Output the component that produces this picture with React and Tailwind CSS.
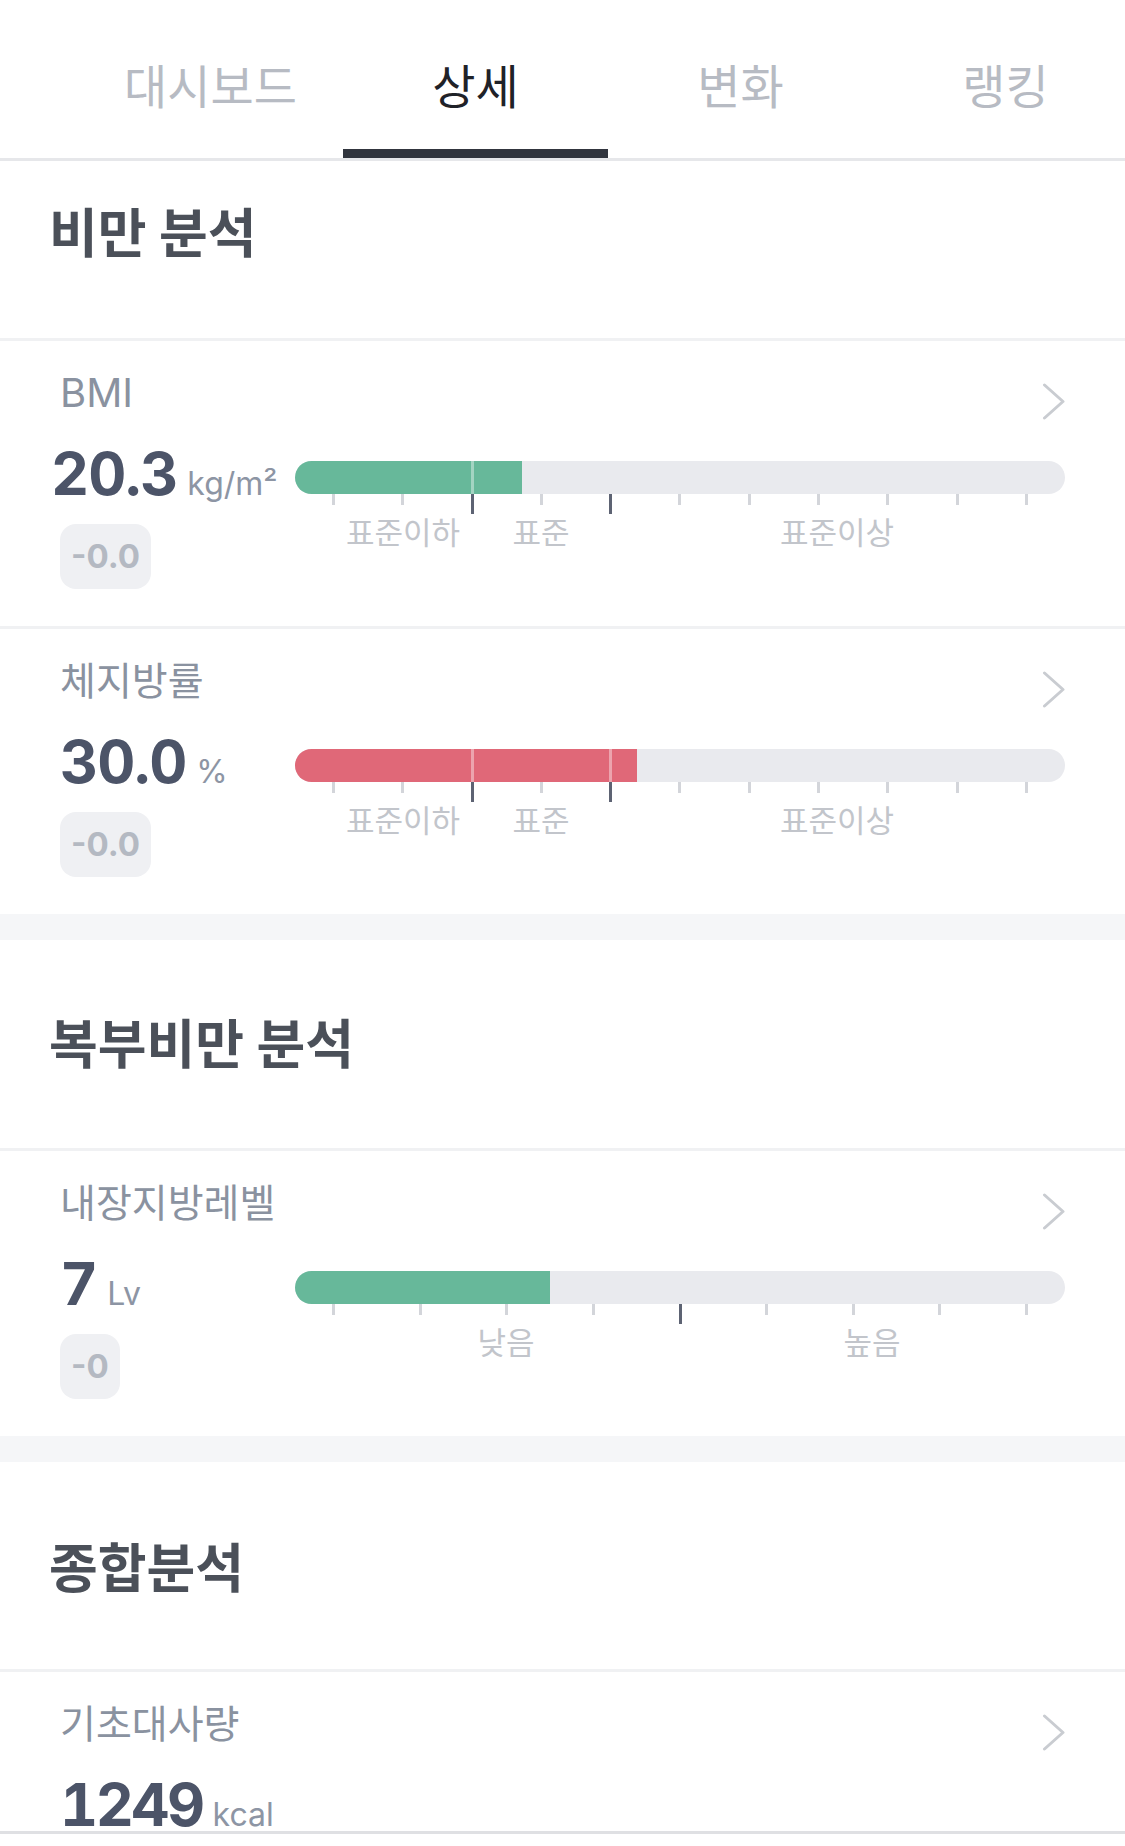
import React from "react";

const tabs = ["대시보드", "상세", "변화", "랭킹"];

const standardTicks = [0, 0, 1, 0, 1, 0, 0, 0, 0, 0, 0];
const levelTicks = [0, 0, 0, 0, 1, 0, 0, 0, 0];

const standardLabels = [
  { text: "표준이하", x: "left-[108px]" },
  { text: "표준", x: "left-[246px]" },
  { text: "표준이상", x: "left-[542px]" },
];

const levelLabels = [
  { text: "낮음", x: "left-[211px]" },
  { text: "높음", x: "left-[577px]" },
];

const BAR_W = 769;
const BAR_PAD = 37;

const Chevron = () => (
  <svg width="24" height="37" viewBox="0 0 24 37" className="mt-[8px] -mr-[1px] shrink-0">
    <polyline
      points="2.5,2 21,18.5 2.5,35"
      fill="none"
      stroke="#c9ccd1"
      strokeWidth="3"
      strokeLinecap="round"
      strokeLinejoin="round"
    />
  </svg>
);

const Gauge = ({ fill, color, ticks, labels }) => {
  const step = (BAR_W - BAR_PAD * 2 - 3) / (ticks.length - 1);
  return (
    <div>
      <div className="relative h-[33px] rounded-full bg-[#e9eaee] overflow-hidden">
        <div className={`h-full ${color}`} style={{ width: fill }} />
        <div className="absolute inset-0 flex justify-between px-[37px]">
          {ticks.map((d, i) => (
            <div
              key={i}
              className={`w-[3px] h-full ${d && BAR_PAD + i * step < fill ? "bg-white/40" : ""}`}
            />
          ))}
        </div>
      </div>
      <div className="flex justify-between items-start px-[37px]">
        {ticks.map((d, i) => (
          <div
            key={i}
            className={d ? "w-[3px] h-[20px] bg-[#5d6373]" : "w-[3px] h-[11px] bg-[#d3d5da]"}
          />
        ))}
      </div>
      <div className="relative h-[32px] mt-[3px]">
        {labels.map((l) => (
          <span
            key={l.text}
            className={`absolute top-0 ${l.x} -translate-x-1/2 text-[31px] leading-[32px] text-[#c2c5cb] whitespace-nowrap`}
          >
            {l.text}
          </span>
        ))}
      </div>
    </div>
  );
};

const MetricRow = ({ label, labelSize, value, unit, valueShift, delta, gauge }) => (
  <div className="border-t-[3px] border-[#f0f1f3] h-[288px] px-[60px] pt-[34px]">
    <div className="flex justify-between items-start h-[36px]">
      <span className={`${labelSize} leading-[36px] text-[#8a92a0] whitespace-nowrap`}>{label}</span>
      <Chevron />
    </div>
    <div className="flex mt-[33px]">
      <div className="w-[235px] shrink-0">
        <div className={`flex items-baseline h-[59px] ${valueShift}`}>
          <span className="text-[59px] leading-none font-bold text-[#4c5468] tracking-[-1px] tabular-nums">
            {value}
          </span>
          <span className="ml-[10px] text-[32px] leading-none text-[#8d95a4]">{unit}</span>
        </div>
        <div className="mt-[21px] inline-flex items-center h-[65px] px-[11px] rounded-[16px] bg-[#eff0f3]">
          <span className="text-[33px] leading-none font-bold text-[#b4b9c2]">{delta}</span>
        </div>
      </div>
      <div className="flex-1 pt-[17px]">
        <Gauge {...gauge} />
      </div>
    </div>
  </div>
);

const SectionHeader = ({ title, pad }) => (
  <div className={pad}>
    <h2 className="text-[53px] leading-[53px] font-bold text-[#4b5059] whitespace-nowrap">{title}</h2>
  </div>
);

const Band = () => <div className="h-[26px] bg-[#f5f6f8]" />;

export default function App() {
  return (
    <div className="w-[1125px] min-h-[1846px] bg-white overflow-hidden font-[Inter,'Noto_Sans_CJK_KR',sans-serif]">
      <div className="flex pl-[78px] border-b-[3px] border-[#e6e7ea] overflow-hidden">
        {tabs.map((t) => (
          <div key={t} className="w-[265px] shrink-0 h-[158px] flex flex-col">
            <div
              className={`flex-1 flex items-center justify-center pt-[24px] text-[47px] leading-none font-normal ${
                t === "상세" ? "text-[#1f2228]" : "text-[#b7bbc3]"
              }`}
            >
              {t}
            </div>
            <div className={`h-[9px] ${t === "상세" ? "bg-[#31353e]" : ""}`} />
          </div>
        ))}
      </div>

      <SectionHeader title="비만 분석" pad="h-[177px] pt-[47px] px-[49px]" />
      <MetricRow
        label="BMI"
        labelSize="text-[40px]"
        value="20.3"
        unit="kg/m²"
        valueShift="-ml-[9px]"
        delta="-0.0"
        gauge={{ fill: 227, color: "bg-[#67b89a]", ticks: standardTicks, labels: standardLabels }}
      />
      <MetricRow
        label="체지방률"
        labelSize="text-[39px]"
        value="30.0"
        unit="%"
        valueShift=""
        delta="-0.0"
        gauge={{ fill: 342, color: "bg-[#e06878]", ticks: standardTicks, labels: standardLabels }}
      />
      <Band />

      <SectionHeader title="복부비만 분석" pad="h-[208px] pt-[79px] px-[49px]" />
      <MetricRow
        label="내장지방레벨"
        labelSize="text-[39px]"
        value="7"
        unit="Lv"
        valueShift=""
        delta="-0"
        gauge={{ fill: 255, color: "bg-[#67b89a]", ticks: levelTicks, labels: levelLabels }}
      />
      <Band />

      <SectionHeader title="종합분석" pad="h-[207px] pt-[81px] px-[49px]" />
      <div className="border-t-[3px] border-[#f0f1f3] h-[165px] px-[60px] pt-[34px] border-b-[3px] border-b-[#dfe0e3]">
        <div className="flex justify-between items-start h-[36px]">
          <span className="text-[39px] leading-[36px] text-[#8a92a0] whitespace-nowrap">기초대사량</span>
          <Chevron />
        </div>
        <div className="flex items-baseline h-[52px] mt-[33px]">
          <span className="text-[59px] leading-none font-bold text-[#4c5468] tracking-[-2.5px] tabular-nums">
            1249
          </span>
          <span className="ml-[10px] text-[32px] leading-none text-[#8d95a4]">kcal</span>
        </div>
      </div>
    </div>
  );
}
